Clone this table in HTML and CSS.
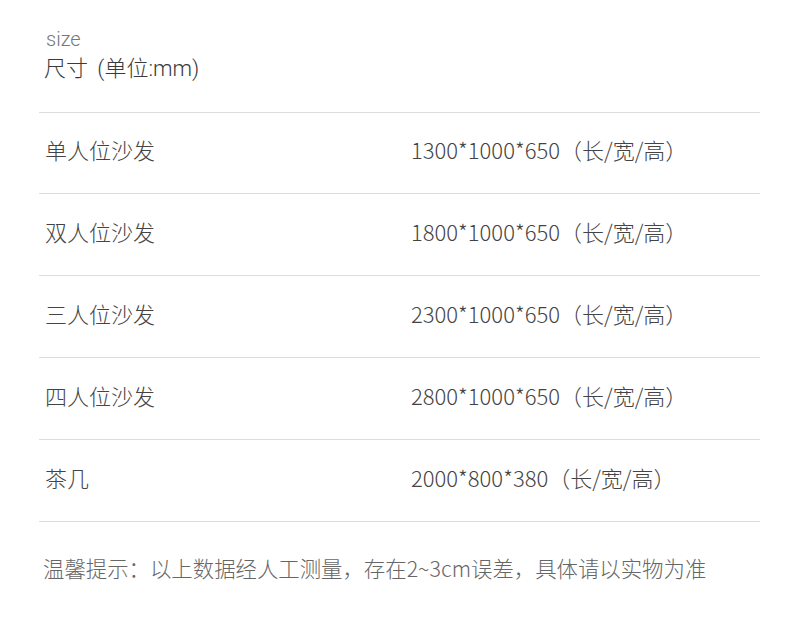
FILE: index.html
```html
<!DOCTYPE html>
<html lang="zh">
<head>
<meta charset="utf-8">
<link rel="stylesheet" href="styles.css">
</head>
<body>
<div class="page">
  <div class="head">
    <div class="en">size</div>
    <div class="cn">尺寸 (单位:mm)</div>
  </div>
  <div class="table">
    <div class="row"><div class="name">单人位沙发</div><div class="val">1300*1000*650（长/宽/高）</div></div>
    <div class="row"><div class="name">双人位沙发</div><div class="val">1800*1000*650（长/宽/高）</div></div>
    <div class="row"><div class="name">三人位沙发</div><div class="val">2300*1000*650（长/宽/高）</div></div>
    <div class="row"><div class="name">四人位沙发</div><div class="val">2800*1000*650（长/宽/高）</div></div>
    <div class="row"><div class="name">茶几</div><div class="val">2000*800*380（长/宽/高）</div></div>
  </div>
  <div class="note">温馨提示：以上数据经人工测量，存在2~3cm误差，具体请以实物为准</div>
</div>
</body>
</html>
```
FILE: styles.css
```css
html, body { margin: 0; padding: 0; background: #fff; }
body { font-family: "Noto Sans CJK SC", "Noto Sans", sans-serif; color: #444; font-weight: 300; }
.page { width: 721px; margin-left: 39px; padding-top: 26px; }
.head { padding-left: 7px; height: 86px; box-sizing: border-box; }
.en { font-family: "Roboto", "Liberation Sans", sans-serif; font-size: 20px; line-height: 26px; color: #777; }
.cn { font-family: "Roboto", "Noto Sans CJK SC", sans-serif; font-size: 22px; line-height: 34px; color: #3a3a3a; margin-left: -2px; word-spacing: 4px; }
.table { border-top: 1px solid #ddd; }
.row { display: grid; grid-template-columns: 372px 1fr; height: 81px; align-items: center; border-bottom: 1px solid #ddd; font-size: 22px; color: #444; padding-bottom: 8px; box-sizing: border-box; }
.row + .row { height: 82px; }
.name { padding-left: 6px; }
.note { font-size: 21.4px; color: #666; padding-left: 4px; margin-top: 30px; line-height: 32px; }
```
